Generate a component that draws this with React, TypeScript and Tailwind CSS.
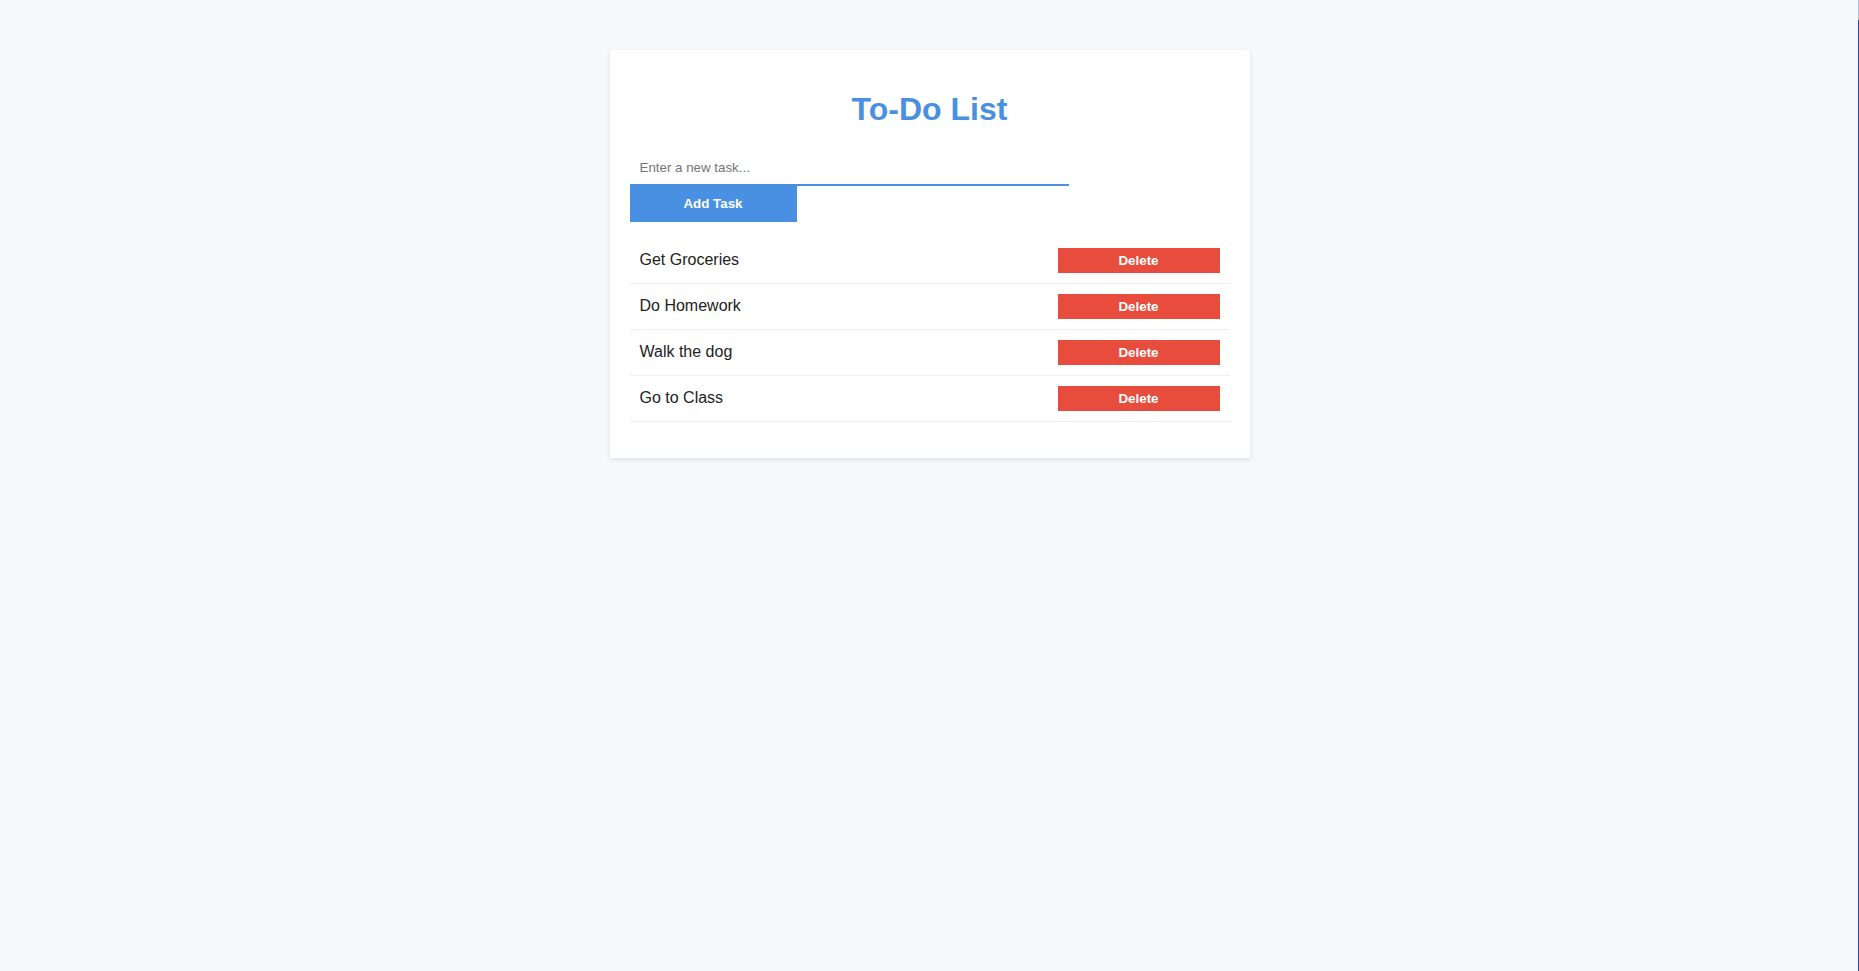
import React, { useState } from 'react';

const INITIAL_TASKS = ['Get Groceries', 'Do Homework', 'Walk the dog', 'Go to Class'];

export default function App() {
  const [tasks, setTasks] = useState<string[]>(INITIAL_TASKS);
  const [text, setText] = useState('');

  const addTask = () => {
    if (!text.trim()) return;
    setTasks([...tasks, text.trim()]);
    setText('');
  };

  return (
    <div className="min-h-[971px] bg-[#f7f8fa] pt-[50px] font-['Liberation_Sans',Arial,sans-serif]">
      {/* Card */}
      <div className="mx-auto w-[640px] bg-white p-5 shadow-[0_2px_5px_rgba(0,0,0,0.1)]">
        <h1 className="my-[21px] text-center text-[32px] leading-[37px] font-bold text-[#4a90e2]">To-Do List</h1>

        <input
          type="text"
          value={text}
          onChange={(e) => setText(e.target.value)}
          placeholder="Enter a new task..."
          className="block w-[439px] border-b-2 border-[#4a90e2] px-[10px] pt-[11px] pb-[9px] text-[13.33px] leading-[15px] text-[#222] placeholder-[#757575] outline-none"
        />
        <button
          onClick={addTask}
          className="block h-[36px] w-[167px] bg-[#4a90e2] text-[13.33px] font-bold text-white"
        >
          Add Task
        </button>

        <ul className="mt-4 mb-4">
          {tasks.map((task, i) => (
            <li
              key={i}
              className="flex items-center justify-between border-b border-[#eeeeee] p-[10px]"
            >
              <span className="-mt-[2px] text-[16px] text-[#222]">{task}</span>
              <button
                onClick={() => setTasks(tasks.filter((_, j) => j !== i))}
                className="w-[162px] bg-[#e74c3c] py-[5px] text-[13.33px] leading-[15px] font-bold text-white"
              >
                Delete
              </button>
            </li>
          ))}
        </ul>
      </div>

      {/* window edge line */}
      <div className="fixed top-0 right-0 h-[20px] w-px bg-[#a9bfe2]" />
      <div className="fixed top-[20px] right-0 bottom-0 w-px bg-[#1c4fa6]" />
    </div>
  );
}
